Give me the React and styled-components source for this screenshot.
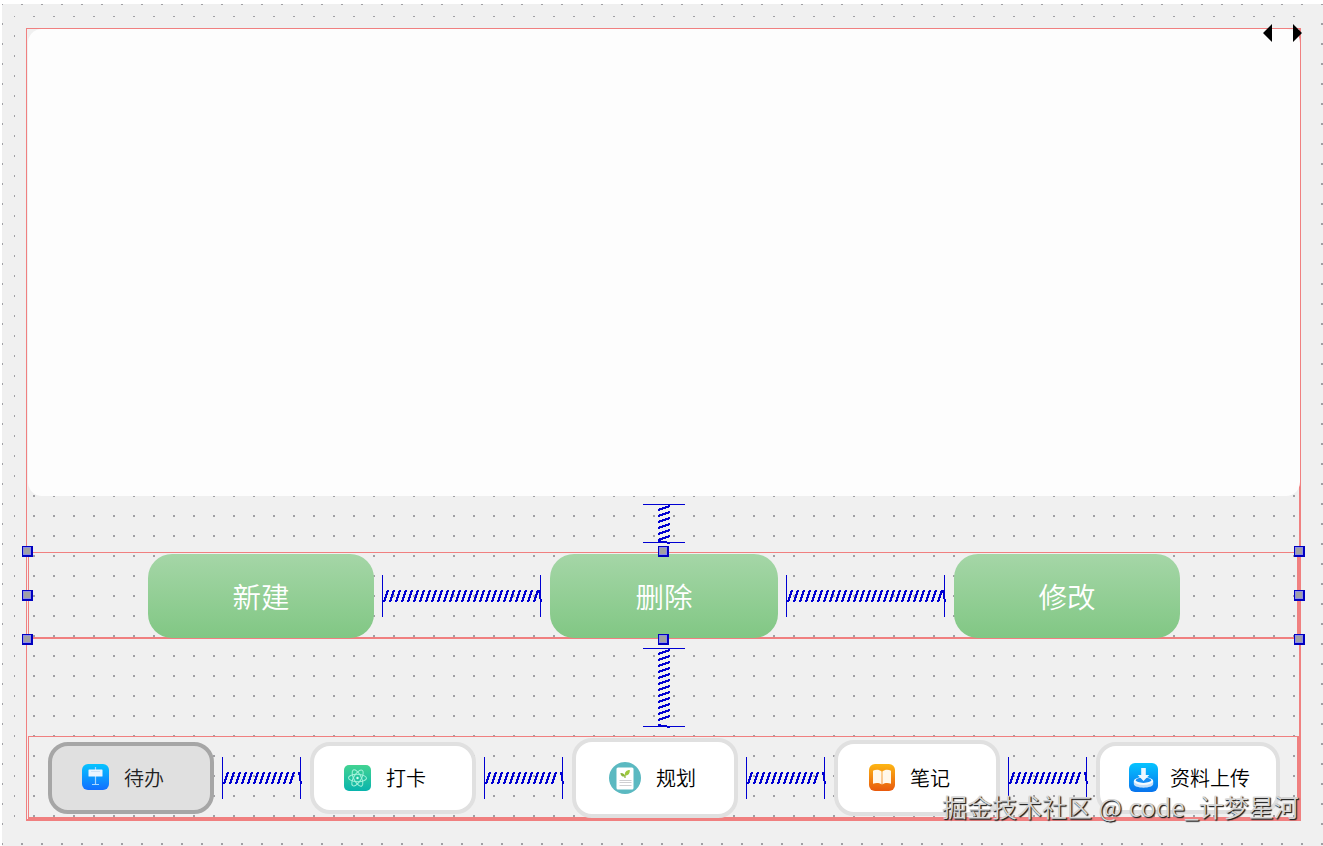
import React from "react";
import styled, { createGlobalStyle } from "styled-components";

const GlobalStyle = createGlobalStyle`
  body {
    margin: 0;
    background: #fff;
    overflow: hidden;
    font-family: "Noto Sans CJK SC", "Liberation Sans", sans-serif;
  }
`;

const FRAME = "#f08080";
const BLUE = "#0000d2";

const Page = styled.div`
  position: relative;
  box-sizing: border-box;
  width: 1323px;
  height: 846px;
  padding: 4px 0 0 2px;
  overflow: hidden;
`;

const DotGrid = styled.div`
  box-sizing: border-box;
  height: ${(p) => p.$height}px;
  width: ${(p) => p.$width}px;
  padding: 12px;
  background: #f0f0f0
    conic-gradient(at 2px 2px, transparent 0 75%, #a0a0a4 75% 100%) -1px -1px /
    20px 20px;
`;

const Layout = styled.div`
  box-sizing: border-box;
  display: flex;
  flex-direction: column;
  height: 793px;
  padding-left: 1px;
  border: solid ${FRAME};
  border-width: 1px 2px 2px 1px;
`;

const ListPanel = styled.div`
  flex: none;
  height: 467px;
  margin-right: -1px;
  border-radius: 14px;
  background: #fdfdfd;
`;

const VerticalGap = styled.div`
  flex: none;
  display: flex;
  justify-content: center;
  box-sizing: border-box;
  height: ${(p) => p.$height}px;
  padding-top: ${(p) => p.$top}px;
  padding-left: 1px;
`;

const Row = styled.div`
  flex: none;
  box-sizing: border-box;
  display: flex;
  align-items: center;
  height: ${(p) => p.$height}px;
  border: solid ${FRAME};
  border-width: 1px 2px 2px 1px;
  padding-left: ${(p) => p.$left}px;
`;

const ActionButton = styled.button`
  flex: none;
  width: ${(p) => p.$width}px;
  height: 84px;
  margin: 2px 0 0;
  padding: 0;
  border: 0;
  border-radius: 24px;
  background: linear-gradient(#a5d6a7, #81c784);
  color: #fff;
  font: 350 28.5px/1 "Noto Sans CJK SC", sans-serif;
`;

const TabButton = styled.button`
  flex: none;
  box-sizing: border-box;
  display: flex;
  align-items: center;
  width: ${(p) => p.$width}px;
  height: ${(p) => p.$height}px;
  margin: 1px 0 0;
  padding: 0 0 0 ${(p) => p.$pad}px;
  gap: ${(p) => p.$gap}px;
  border: 4px solid ${(p) => (p.$active ? "#a6a6a6" : "#e0e0e0")};
  border-radius: 20px;
  background: ${(p) => (p.$active ? "#e0e0e0" : "#fff")};
  color: ${(p) => (p.$active ? "#222" : "#000")};
  font: 350 20px/28px "Noto Sans CJK SC", sans-serif;
  white-space: nowrap;
`;

const Label = styled.span`
  flex: none;
  padding-top: 1px;
`;

const SpringSvg = styled.svg`
  flex: none;
  display: block;
  margin: ${(p) => p.$margin || "0"};
`;

const Handle = styled.span`
  position: absolute;
  box-sizing: border-box;
  left: ${(p) => p.$x}px;
  top: ${(p) => p.$y}px;
  width: 11px;
  height: 11px;
  border: 1px solid #0000c0;
  border-right-width: 2px;
  border-bottom-width: 2px;
  background: #a0a0a4;
  box-shadow: inset 0 0 0 1px #8c8ce6;
`;

const ScrollArrows = styled.svg`
  position: absolute;
  left: 1263px;
  top: 24px;
`;

const Watermark = styled.div`
  position: absolute;
  left: 942px;
  top: 788px;
  color: #d6d6d6;
  font: 350 25px/36px "Noto Sans CJK SC", sans-serif;
  word-spacing: 1px;
  white-space: nowrap;
  text-shadow: 1px 1px 1px #222, 1px 1px 1px #444;
`;

function Spring({ length, vertical, margin }) {
  const count = Math.floor((length - 3) / 6);
  const marks = Array.from({ length: count }, (_, i) => i * 6);
  if (vertical) {
    return (
      <SpringSvg width="42" height={length + 1} $margin={margin} fill="none" stroke={BLUE} shapeRendering="crispEdges">
        <path d={`M0 .5H42M0 ${length - 0.5}H42`} />
        <path strokeWidth="2" d={marks.map((y) => `M15 ${y + 6}L27 ${y + 2}`).join("") + `M15 ${length - 2}L27 ${length}`} />
      </SpringSvg>
    );
  }
  return (
    <SpringSvg width={length + 1} height="42" $margin={margin} fill="none" stroke={BLUE} shapeRendering="crispEdges">
      <path d={`M.5 0V42M${length - 0.5} 0V42`} />
      <path strokeWidth="2" d={marks.map((x) => `M${x + 2} 27L${x + 6} 15`).join("") + `M${length - 2} 15L${length} 27`} />
    </SpringSvg>
  );
}

function Gradient({ id, from, to }) {
  return (
    <linearGradient id={id} x1="0" y1="0" x2="0" y2="1">
      <stop stopColor={from} />
      <stop offset="1" stopColor={to} />
    </linearGradient>
  );
}

const BoardIcon = () => (
  <svg width="27" height="28" viewBox="0 0 27 28">
    <Gradient id="board" from="#06c4ff" to="#126fff" />
    <rect width="27" height="26" rx="6" fill="url(#board)" />
    <path d="M13.5 3v18M10 20.5h7" stroke="#a8d6ff" strokeWidth="1.2" />
    <rect x="6.5" y="5.5" width="14" height="7" rx=".6" fill="#eaf5ff" />
    <path d="M9 7.5h9" stroke="#c6def4" strokeWidth=".8" />
  </svg>
);

const AtomIcon = () => (
  <svg width="27" height="26" viewBox="0 0 27 26">
    <Gradient id="atom" from="#42d392" to="#08b4ad" />
    <rect width="27" height="26" rx="5" fill="url(#atom)" />
    <g fill="none" stroke="#a6f3dc" strokeWidth="1">
      <ellipse cx="13.5" cy="13" rx="3.7" ry="9" transform="rotate(-28 13.5 13)" />
      <ellipse cx="13.5" cy="13" rx="3.7" ry="9" transform="rotate(32 13.5 13)" />
      <ellipse cx="13.5" cy="13" rx="3.7" ry="9" transform="rotate(92 13.5 13)" />
    </g>
    <circle cx="13.5" cy="13" r="1.2" fill="#d8fff3" />
  </svg>
);

const PlanIcon = () => (
  <svg width="32" height="32" viewBox="0 0 32 32">
    <circle cx="16" cy="16" r="16" fill="#5bb9c1" />
    <rect x="7.5" y="5.5" width="17" height="22" rx="1.5" fill="#fff" />
    <path d="M10.5 18.5h12M10.5 20.5h12M10.5 23.5h12" stroke="#cfcfd2" />
    <path d="M16 16v-3" stroke="#8ab53c" strokeWidth="1.2" />
    <path d="M16 14.5c-2.8.4-4.4-1-4.6-3.6 2.7-.2 4.6.9 4.6 3.6z" fill="#8ab53c" />
    <path d="M15.8 13.5c-.2-3.7 1.6-5.4 5-5.5.2 3.7-1.5 5.5-5 5.5z" fill="#9fca3c" />
  </svg>
);

const BookIcon = () => (
  <svg width="26" height="27" viewBox="0 0 26 27">
    <Gradient id="book" from="#fdb614" to="#e8590c" />
    <rect width="26" height="27" rx="6" fill="url(#book)" />
    <path d="M12.6 7.5C10 5.2 6.5 5.5 4 6.7v13c3-1.2 6-1.1 8.6.7zM13.4 7.5C16 5.2 19.5 5.5 22 6.7v13c-3-1.2-6-1.1-8.6.7z" fill="#fff7ea" />
  </svg>
);

const UploadIcon = () => (
  <svg width="29" height="29" viewBox="0 0 29 29">
    <Gradient id="upload" from="#06c4ff" to="#0873ed" />
    <rect width="29" height="29" rx="6" fill="url(#upload)" />
    <path d="M4.8 18v2.8c0 5.2 19.4 5.2 19.4 0V18z" fill="#c4dff9" />
    <ellipse cx="14.5" cy="18" rx="9.7" ry="4" fill="#f5fbff" />
    <ellipse cx="14.5" cy="17.2" rx="7.6" ry="2.7" fill="#178ef4" />
    <path d="M12.2 5h4.6v7h3.5l-5.8 6-5.8-6h3.5z" fill="#eef7ff" />
  </svg>
);

const TABS = [
  { text: "待办", Icon: BoardIcon, width: 166, height: 72, pad: 30, gap: 15, active: true },
  { text: "打卡", Icon: AtomIcon, width: 166, height: 72, pad: 30, gap: 15 },
  { text: "规划", Icon: PlanIcon, width: 166, height: 80, pad: 33, gap: 15 },
  { text: "笔记", Icon: BookIcon, width: 166, height: 76, pad: 31, gap: 15 },
  { text: "资料上传", Icon: UploadIcon, width: 184, height: 72, pad: 29, gap: 12 },
];

const HANDLES = [22, 658, 1294].flatMap((x) =>
  [546, 590, 634].filter((y) => x !== 658 || y !== 590).map((y) => [x, y])
);

export default function App() {
  return (
    <Page>
      <GlobalStyle />
      <DotGrid $width={1321} $height={842}>
        <DotGrid $width={1299} $height={817}>
          <Layout>
            <ListPanel />
            <VerticalGap $height={56} $top={8}>
              <Spring vertical length={39} />
            </VerticalGap>
            <Row $height={87} $left={119}>
              <ActionButton $width={226}>新建</ActionButton>
              <Spring length={159} margin="2px 8px 0" />
              <ActionButton $width={228}>删除</ActionButton>
              <Spring length={159} margin="2px 8px 0" />
              <ActionButton $width={226}>修改</ActionButton>
            </Row>
            <VerticalGap $height={97} $top={9}>
              <Spring vertical length={79} />
            </VerticalGap>
            <Row $height={83} $left={19}>
              {TABS.map(({ text, Icon, width, height, pad, gap, active }, i) => (
                <React.Fragment key={text}>
                  {i > 0 && <Spring length={79} margin="2px 8px 0" />}
                  <TabButton $width={width} $height={height} $pad={pad} $gap={gap} $active={active}>
                    <Icon />
                    <Label>{text}</Label>
                  </TabButton>
                </React.Fragment>
              ))}
            </Row>
          </Layout>
        </DotGrid>
      </DotGrid>
      {HANDLES.map(([x, y]) => (
        <Handle key={`${x}-${y}`} $x={x} $y={y} />
      ))}
      <ScrollArrows width="39" height="18" viewBox="0 0 39 18">
        <path d="M9 0v18L0 9zM30 0v18l9-9z" />
      </ScrollArrows>
      <Watermark>掘金技术社区 @ code_计梦星河</Watermark>
    </Page>
  );
}
